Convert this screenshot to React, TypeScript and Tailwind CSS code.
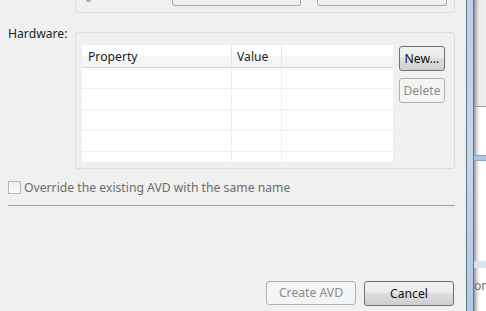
import React from "react";

function Btn({ label, disabled, w, h }: { label: string; disabled?: boolean; w: string; h: string }) {
  return (
    <div
      className={
        "flex items-center justify-center rounded-[3px] border " +
        w +
        " " +
        h +
        " " +
        (disabled
          ? "border-[#adb2b5] bg-[#f4f4f4] text-[#8d8d8d]"
          : "border-[#707070] bg-[linear-gradient(#f2f2f2,#ebebeb_45%,#dddddd_50%,#cfcfcf)] text-[#111]")
      }
    >
      {label}
    </div>
  );
}

export default function App() {
  const rows = [0, 1, 2, 3];
  return (
    <div className="w-[486px] h-[311px] bg-[#f0f0f0] flex overflow-hidden font-['Noto_Sans',sans-serif] text-[12.2px] leading-[16px] text-[#1e1e1e]">
      <div className="w-[466px] shrink-0 flex flex-col">
        {/* partial group at top */}
        <div className="ml-[75px] w-[380px] h-[13px] border-x border-b border-[#d5dfe5] rounded-b-[3px] flex gap-[16px] pl-[96px] relative">
          <div className="absolute left-[10px] top-0 w-[5px] h-[2px] rounded-b-full bg-[#a8a8a8]" />
          <div className="w-[129px] h-[6px] border-x border-b border-[#acacac] rounded-b-[3px]" />
          <div className="w-[130px] h-[6px] border-x border-b border-[#acacac] rounded-b-[3px]" />
        </div>

        {/* Hardware row */}
        <div className="flex items-start mt-[12px]">
          <div className="w-[75px] pl-[8px] pt-[1px]">Hardware:</div>
          <div className="mt-[7px] w-[380px] h-[137px] border border-[#d5dfe5] rounded-[3px] flex pl-[6px] pt-[12px] gap-[6px]">
            <div className="w-[311px] h-[117px] bg-white flex flex-col overflow-hidden">
              <div className="h-[23px] flex border-b border-[#d5d5d5] bg-[linear-gradient(#ffffff_45%,#f3f4f6_55%)]">
                <div className="w-[150px] border-r border-[#e3e5e8] pl-[6px] pt-[1px] flex items-center">Property</div>
                <div className="w-[50px] border-r border-[#e3e5e8] pl-[5px] pt-[1px] flex items-center">Value</div>
                <div className="flex-1" />
              </div>
              {rows.map((r) => (
                <div key={r} className="h-[21px] flex border-b border-[#eeeff2]">
                  <div className="w-[150px] border-r border-[#eeeff2]" />
                  <div className="w-[50px] border-r border-[#eeeff2]" />
                  <div className="flex-1" />
                </div>
              ))}
              <div className="flex-1 flex">
                <div className="w-[150px] border-r border-[#eeeff2]" />
                <div className="w-[50px] border-r border-[#eeeff2]" />
                <div className="flex-1" />
              </div>
            </div>
            <div className="flex flex-col gap-[7px] pt-[1px]">
              <Btn label="New..." w="w-[46px]" h="h-[25px]" />
              <Btn label="Delete" disabled w="w-[46px]" h="h-[25px]" />
            </div>
          </div>
        </div>

        {/* checkbox */}
        <div className="flex items-center mt-[12px] pl-[8px] h-[13px]">
          <div className="w-[13px] h-[13px] border border-[#b8b8b8] bg-[linear-gradient(#f0f0f0,#fafafa)]" />
          <span className="ml-[3px] text-[#6d6d6d]">Override the existing AVD with the same name</span>
        </div>

        {/* separator */}
        <div className="ml-[8px] mt-[11px] w-[447px] h-px bg-[#a0a0a0]" />

        <div className="flex-1" />

        <div className="flex justify-end gap-[8px] pr-[12px] mb-[5px]">
          <Btn label="Create AVD" disabled w="w-[90px]" h="h-[24px]" />
          <Btn label="Cancel" w="w-[90px]" h="h-[25px]" />
        </div>
      </div>

      {/* window border */}
      <div className="w-px shrink-0 bg-[#5f6f86]" />
      <div className="w-[6px] shrink-0 bg-[linear-gradient(#b9d1ea,#c4d8ee_50%,#b0c9e6)]" />
      <div className="w-px shrink-0 bg-[#65748a]" />

      {/* window behind */}
      <div className="flex-1 min-w-0 flex flex-col bg-[linear-gradient(90deg,#8c8c8c,#cfcfcf_25%,#ececec_45%,#f0f0f0)]">
        <div className="h-[106px]" />
        <div className="h-px bg-[#9a9a9a]" />
        <div className="h-[48px] bg-[linear-gradient(90deg,#9a9a9a,#e6e6e6_30%,#ffffff_50%)]" />
        <div className="h-[6px] bg-[#aec6e6] border-y border-[#8ea6c6]" />
        <div className="h-[100px] bg-[linear-gradient(90deg,#9a9a9a,#e6e6e6_30%,#ffffff_50%)]" />
        <div className="h-[7px] bg-[#dbe3ef]" />
        <div className="flex-1 bg-[linear-gradient(90deg,#9a9a9a,#e6e6e6_30%,#ffffff_50%)] pt-[11px] text-[#6d6d6d] leading-[14px] overflow-hidden whitespace-nowrap">
          on
        </div>
      </div>
    </div>
  );
}
